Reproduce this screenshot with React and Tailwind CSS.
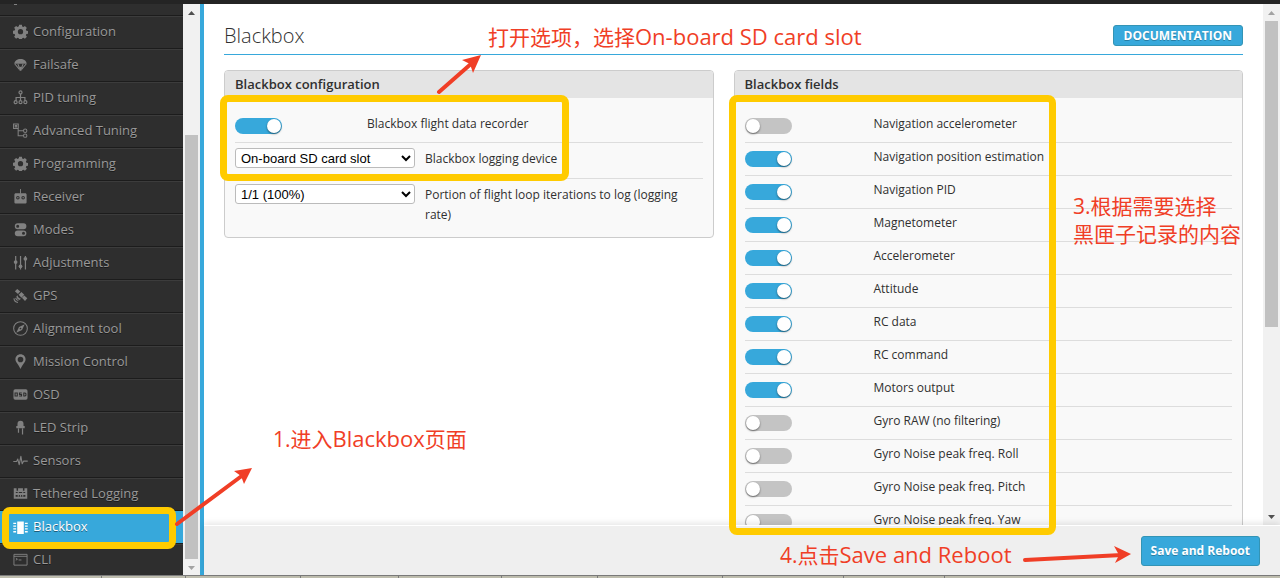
const Glyph = ({ children }) => (
  <svg viewBox="0 0 16 16" className="size-[15px] shrink-0" fill="currentColor" aria-hidden="true">{children}</svg>
);
const line = { fill: "none", stroke: "currentColor" };

const Gear = () => (
  <Glyph>
    <path fillRule="evenodd" d="M6.500.8h3l.3 1.800 1.400.6 1.500-1.100 2.100 2.100-1.100 1.500.6 1.400 1.800.3v3l-1.800.3-.6 1.400 1.100 1.500-2.100 2.100-1.500-1.100-1.400.6-.3 1.800h-3l-.3-1.800-1.400-.6-1.500 1.100-2.100-2.100 1.100-1.500-.6-1.400L0 10.300v-3L1.700 7l.6-1.400-1.100-1.500L3.300 2l1.500 1.100 1.400-.6zM8 5.400a2.800 2.800 0 1 0 0 5.600 2.800 2.800 0 0 0 0-5.600z" />
  </Glyph>
);
const Parachute = () => (
  <Glyph>
    <path d="M8 2.200c3.600 0 6.300 2 6.600 5.100H1.400C1.700 4.200 4.400 2.200 8 2.200z" />
    <path {...line} strokeWidth="1.100" d="M1.800 7.200 7 13.400M14.200 7.200 9 13.400M5.200 7.500l2 5M10.800 7.500l-2 5" />
    <path d="M7 10.500h2v4.200H7z" />
  </Glyph>
);
const Tree = () => (
  <Glyph>
    <g {...line} strokeWidth="1.300">
      <circle cx="8" cy="2.600" r="1.600" /><circle cx="2.800" cy="13" r="1.600" /><circle cx="8" cy="13" r="1.600" /><circle cx="13.200" cy="13" r="1.600" />
      <path d="M8 4.300v7M3.300 11.400V8h9.400v3.400" />
    </g>
  </Glyph>
);
const Branch = () => (
  <Glyph>
    <g {...line} strokeWidth="1.100">
      <path d="M.6 1h5v4.800h-5zM2.400 2.700h1.500v1.500H2.400zM5.500 6v7.500h5.700M5.500 8.300h5.700" />
      <circle cx="13" cy="8.300" r="1.800" /><circle cx="13" cy="13.500" r="1.800" />
    </g>
  </Glyph>
);
const Receiver = () => (
  <Glyph>
    <path d="M7.500 0h1v5h-1z" />
    <path fillRule="evenodd" d="M3.200 4.500h9.600c1.200 0 1.700.6 1.700 1.500v8c0 .9-.5 1.500-1.700 1.500H3.200c-1.200 0-1.700-.6-1.700-1.500V6c0-.9.5-1.500 1.700-1.500zm2 2.900a1.900 1.900 0 1 0 0 3.800 1.900 1.900 0 0 0 0-3.800zm5.600 0a1.900 1.900 0 1 0 0 3.800 1.900 1.900 0 0 0 0-3.800z" />
    <circle cx="5.200" cy="9.300" r=".8" /><circle cx="10.800" cy="9.300" r=".8" />
  </Glyph>
);
const Modes = () => (
  <Glyph>
    <path fillRule="evenodd" d="M5 1.400h6.200a3.100 3.100 0 0 1 0 6.200H5a3.100 3.100 0 0 1 0-6.200zm0 1.500a1.600 1.600 0 1 0 0 3.200 1.600 1.600 0 0 0 0-3.200zM5 9h6.200a3.100 3.100 0 0 1 0 6.200H5A3.100 3.100 0 0 1 5 9zm6.200 1.500a1.600 1.600 0 1 0 0 3.200 1.600 1.600 0 0 0 0-3.200z" />
  </Glyph>
);
const Sliders = () => (
  <Glyph>
    <path d="M2.200 1h1.300v14.500H2.200zM7.400 1h1.300v14.500H7.400zM12.600 1h1.300v14.500h-1.300z" />
    <circle cx="2.800" cy="7.500" r="2" /><circle cx="8" cy="12" r="2" /><circle cx="13.200" cy="4" r="2" />
  </Glyph>
);
const Satellite = () => (
  <Glyph>
    <path d="M2 3.500 4.500 1l3.300 2.800-2.500 2.500zM9.500 10.500 12 8l3.300 3-2.500 2.800zM6 7.200 9 4.300l3 3-3 3z" />
    <path d="M4.800 7.700c.3 2.200 1.500 3.300 3.500 3.500l-1 1.500c-2.200-.3-3.400-1.600-3.700-3.600z" />
    <path {...line} strokeWidth="1.200" d="M2.800 10.500c.4 1.700 1.300 2.500 2.900 2.800M1 11c.3 2.400 1.900 4 4.300 4.400" />
  </Glyph>
);
const Compass = () => (
  <Glyph>
    <circle cx="8" cy="8" r="7.300" {...line} strokeWidth="1.100" />
    <path d="M12.500 3.500 9.600 9.600 3.500 12.500 6.400 6.400z" /><circle cx="8" cy="8" r=".9" fill="#2e2e2e" />
  </Glyph>
);
const Pin = () => (
  <Glyph><path fillRule="evenodd" d="M8 .3c3.100 0 5.400 2.400 5.400 5.200C13.400 8.900 10 11 8 16 6 11 2.600 8.900 2.600 5.500 2.600 2.700 4.900.3 8 .3zm0 2.500a3 3 0 1 0 0 6 3 3 0 0 0 0-6z" /></Glyph>
);
const Osd = () => (
  <Glyph>
    <rect x=".5" y="2.500" width="15" height="11" rx="1.800" />
    <g fill="none" stroke="#2e2e2e" strokeWidth="1.100"><path d="M2.200 6.400h2.400v3.200H2.200zM9.300 6.400H6.900V8h2.200v1.600H6.600M11.500 6.400v3.200h1.400l.9-.8V7.200l-.9-.8z" /></g>
  </Glyph>
);
const Led = () => (
  <Glyph><path d="M4.800 6.500V4a3.200 3.200 0 0 1 6.400 0v2.500h1.300v2.200h-9V6.500zM5.200 9h1.300v4.500H5.200zM9.500 9h1.300v6.500H9.500z" /></Glyph>
);
const Pulse = () => (
  <Glyph><path {...line} strokeWidth="1.200" strokeLinejoin="round" d="M.3 9H3.800l1.300-2.500L6.600 12.500 8.400 3.500l1.400 8L11.200 8.700h4.500" /></Glyph>
);
const Tethered = () => (
  <Glyph>
    <path fillRule="evenodd" d="M.8 2.500h3V5h1.600V2.500h5.200V5h1.600V2.500h3v11H.8zM3 6.300v1.200h10V6.300zM2.800 9.500v1.900h10.400V9.500z" />
    <path d="M5 6h1.200v5.500H5zM7.400 9.400h1.200v2H7.400zM9.800 6H11v5.500H9.800z" />
  </Glyph>
);
const Chip = () => (
  <Glyph>
    <path d="M4.500 1.500h7v13.500h-7zM.3 2.800h3v1.400h-3zM.3 5.800h3v1.400h-3zM.3 8.800h3v1.400h-3zM.3 11.800h3v1.400h-3zM12.700 2.800h3v1.400h-3zM12.700 5.800h3v1.400h-3zM12.700 8.800h3v1.400h-3zM12.700 11.800h3v1.400h-3z" />
  </Glyph>
);
const Terminal = () => (
  <Glyph><path {...line} strokeWidth="1" d="M1 2.500h14v11.500H1zM1 4.600h14M3 6.700l1.700 1L3 8.700M6 8.500h3" /></Glyph>
);

const tabs = [
  ["Configuration", Gear], ["Failsafe", Parachute], ["PID tuning", Tree], ["Advanced Tuning", Branch],
  ["Programming", Gear], ["Receiver", Receiver], ["Modes", Modes], ["Adjustments", Sliders],
  ["GPS", Satellite], ["Alignment tool", Compass], ["Mission Control", Pin], ["OSD", Osd],
  ["LED Strip", Led], ["Sensors", Pulse], ["Tethered Logging", Tethered], ["Blackbox", Chip], ["CLI", Terminal],
];

const fields = [
  ["Navigation accelerometer", false], ["Navigation position estimation", true], ["Navigation PID", true],
  ["Magnetometer", true], ["Accelerometer", true], ["Attitude", true], ["RC data", true],
  ["RC command", true], ["Motors output", true], ["Gyro RAW (no filtering)", false],
  ["Gyro Noise peak freq. Roll", false], ["Gyro Noise peak freq. Pitch", false], ["Gyro Noise peak freq. Yaw", false],
];

const statusCells = ["w-[102px]", "w-[84px]", "w-[115px]", "w-[98px]", "w-[103px]", "w-[96px]", "w-[125px]", "w-[121px]", "w-[101px]"];

function Tab({ name, Icon }) {
  const active = name === "Blackbox";
  return (
    <li>
      <a
        href="#"
        aria-current={active ? "page" : undefined}
        className={
          active
            ? "flex h-[33px] items-center gap-[5px] border-b border-[#1e1e1e] bg-[#37a8db] pl-[13px] text-[13px] text-white"
            : "flex h-[33px] items-center gap-[5px] border-t border-b border-t-[#3c3c3c] border-b-[#1c1c1c] pb-[2px] pl-[13px] text-[13px] text-[#999]"
        }
      >
        <span className={active ? "text-white" : "text-[#818181]"}><Icon /></span>
        <span className="[text-shadow:0_1px_rgba(0,0,0,0.45)]">{name}</span>
      </a>
    </li>
  );
}

function Scrollbar({ top, thumb, upColor, downColor }) {
  return (
    <div className="flex w-[17px] shrink-0 flex-col items-center bg-[#f1f1f1]" aria-hidden="true">
      <svg viewBox="0 0 17 17" className="h-[17px] w-full shrink-0"><path d="M5 11h7L8.500 7z" fill={upColor} /></svg>
      <div className={top} />
      <div className={thumb} />
      <div className="flex-1" />
      <svg viewBox="0 0 17 17" className="h-[17px] w-full shrink-0"><path d="M5 7h7L8.500 11z" fill={downColor} /></svg>
    </div>
  );
}

function Toggle({ id, on }) {
  return (
    <span className="relative block h-4 w-[47px] shrink-0">
      <input id={id} type="checkbox" role="switch" defaultChecked={on} className="peer block h-4 w-[47px] appearance-none rounded-full bg-[#c4c4c4] checked:bg-[#37a8db]" />
      <span className="pointer-events-none absolute top-px left-px size-[14px] rounded-full bg-white shadow-[0_1px_2px_rgba(0,0,0,0.5)] peer-checked:left-8" />
    </span>
  );
}

function Panel({ title, children }) {
  return (
    <section className="overflow-hidden rounded-[4px] border border-[#ccc] bg-[#f9f9f9]">
      <h2 className="h-[27px] bg-[#e4e4e4] px-[10px] text-[13px] leading-[27px] font-semibold text-[#303030]">{title}</h2>
      <div className="px-[10px] pt-3 text-[12px] text-[#303030]">{children}</div>
    </section>
  );
}

const selectClass = "h-5 w-[180px] shrink-0 rounded-[3px] border border-[#bbb] bg-white pl-px font-['Liberation_Sans',sans-serif] text-[13px] leading-4 text-black";
const note = "absolute text-[21px] whitespace-nowrap text-[#f03e26]";
const frame = "absolute rounded-lg border-[7px] border-[#ffcb00]";
const Latin = ({ children }) => <span className="text-[22px]">{children}</span>;

function Annotations() {
  return (
    <div className="pointer-events-none absolute inset-0">
      <div className={`${frame} top-[95px] left-[220px] h-[86px] w-[349px]`} />
      <div className={`${frame} top-[95px] left-[729px] h-[440px] w-[327px]`} />
      <div className={`${frame} top-[507px] left-[2px] h-[42px] w-[174px]`} />
      <p className={`${note} top-[20px] left-[488px] leading-8`}>打开选项，选择<Latin>On-board SD card slot</Latin></p>
      <p className={`${note} top-[422px] left-[273px] leading-8`}>1.进入<Latin>Blackbox</Latin>页面</p>
      <p className={`${note} top-[192px] left-[1073px] leading-7`}>3.根据需要选择<br />黑匣子记录的内容</p>
      <p className={`${note} top-[538px] left-[780px] leading-8`}>4.点击<Latin>Save and Reboot</Latin></p>
      <svg viewBox="0 0 1280 578" className="absolute top-0 left-0 h-[578px] w-[1280px]" aria-hidden="true">
        <g stroke="#f03e26" strokeWidth="4" strokeLinecap="round">
          <path d="M439 92 472 63M177 524 243 475M1025 560 1122 555" />
        </g>
        <g fill="#f03e26">
          <path d="M481 55 462 60 470 64 473 73z" /><path d="M252 468 234 471 241 476 244 484z" /><path d="M1131 554 1114 546 1119 555 1115 563z" />
        </g>
      </svg>
    </div>
  );
}

export default function App() {
  return (
    <div className="relative flex h-screen flex-col overflow-hidden bg-white font-['Open_Sans','Noto_Sans_CJK_SC',sans-serif]">
      <div className="h-1 shrink-0 bg-[#242424]" />
      <div className="flex min-h-0 flex-1">
        <nav className="w-[183px] shrink-0 overflow-hidden bg-[#2e2e2e]">
          <ul>
            <li className="h-3 border-b border-[#1c1c1c] pl-[14px]"><div className="h-px w-[3px] bg-[#818181]" /></li>
            {tabs.map(([name, Icon]) => <Tab key={name} name={name} Icon={Icon} />)}
          </ul>
        </nav>
        <Scrollbar top="h-[114px] shrink-0" thumb="h-[424px] w-[13px] shrink-0 bg-[#c1c1c1]" upColor="#505050" downColor="#a3a3a3" />
        <div className="flex min-w-0 flex-1 flex-col border-l-4 border-[#37a8db]">
          <div className="flex min-h-0 flex-1">
            <main className="min-w-0 flex-1 overflow-hidden px-5">
              <header className="mb-[15px] flex h-[51px] items-end justify-between border-b border-[#37a8db]">
                <h1 className="pb-1 text-[20px] leading-[28px] font-light text-[#303030]">Blackbox</h1>
                <a href="#" className="mb-2 h-[21px] rounded-[3px] border border-[#3394b5] bg-[#37a8db] px-[10px] text-[12px] leading-[19px] font-bold text-white [text-shadow:0_1px_rgba(0,0,0,0.25)]">DOCUMENTATION</a>
              </header>
              <div className="flex items-start">
                <div className="w-1/2 pr-5">
                  <Panel title="Blackbox configuration">
                    <div className="flex h-[33px] border-b border-[#ddd] pt-2">
                      <Toggle id="recorder" on />
                      <label htmlFor="recorder" className="-mt-1 ml-[85px] leading-5">Blackbox flight data recorder</label>
                    </div>
                    <div className="flex h-9 gap-[10px] border-b border-[#ddd] pt-[5px]">
                      <select id="device" className={selectClass}><option>On-board SD card slot</option></select>
                      <label htmlFor="device" className="pt-px leading-5">Blackbox logging device</label>
                    </div>
                    <div className="flex gap-[10px] pt-[5px] pb-3">
                      <select id="rate" className={selectClass}><option>1/1 (100%)</option></select>
                      <label htmlFor="rate" className="pt-px leading-5">Portion of flight loop iterations to log (logging rate)</label>
                    </div>
                  </Panel>
                </div>
                <div className="w-1/2">
                  <Panel title="Blackbox fields">
                    {fields.map(([name, on], i) => (
                      <div key={name} className="flex h-[33px] border-b border-[#ddd] pt-2">
                        <Toggle id={`field-${i}`} on={on} />
                        <label htmlFor={`field-${i}`} className="-mt-1 ml-[82px] leading-5">{name}</label>
                      </div>
                    ))}
                  </Panel>
                </div>
              </div>
            </main>
            <Scrollbar top="h-0 shrink-0" thumb="h-[306px] w-[13px] shrink-0 bg-[#c1c1c1]" upColor="#a3a3a3" downColor="#505050" />
          </div>
          <footer className="relative flex h-[50px] shrink-0 items-center justify-end border-t border-white bg-[#efefef] pr-5 shadow-[0_-2px_6px_rgba(0,0,0,0.1)]">
            <button type="button" className="h-[30px] rounded-[3px] border border-[#3394b5] bg-[#37a8db] px-[9px] text-[12px] font-bold text-white [text-shadow:0_1px_rgba(0,0,0,0.25)]">Save and Reboot</button>
          </footer>
        </div>
      </div>
      <div className="flex h-[3px] shrink-0 border-t border-[#7c7c7c] bg-[#bfbeaf]">
        {statusCells.map((width) => <div key={width} className={`${width} shrink-0 border-r border-[#7c7c7c]`} />)}
      </div>
      <Annotations />
    </div>
  );
}
